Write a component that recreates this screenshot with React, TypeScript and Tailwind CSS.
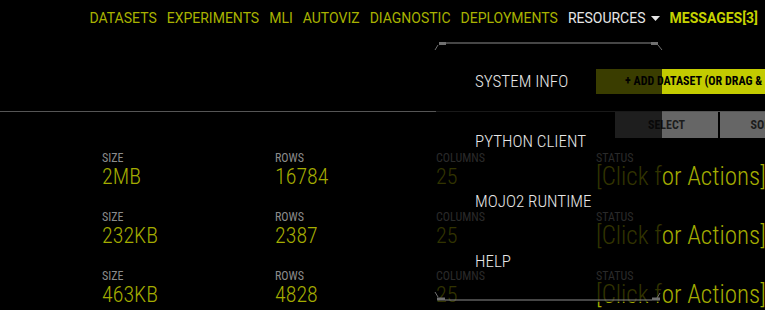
const NAV = ['DATASETS', 'EXPERIMENTS', 'MLI', 'AUTOVIZ', 'DIAGNOSTIC', 'DEPLOYMENTS'];

const DATASETS = [
  { size: '2MB', rows: '16784', cols: '25' },
  { size: '232KB', rows: '2387', cols: '25' },
  { size: '463KB', rows: '4828', cols: '25' },
];

const MENU = ['SYSTEM INFO', 'PYTHON CLIENT', 'MOJO2 RUNTIME', 'HELP'];

const Stat = ({ label, value, big }: { label: string; value: string; big?: boolean }) => (
  <div className="flex flex-col">
    <span className="text-[12px] leading-[13px] text-[#8c8c8c]">{label}</span>
    <span className={`${big ? 'text-[25px]' : 'text-[22px]'} leading-[24px] font-light text-[#a4ac00] whitespace-nowrap`}>
      {value}
    </span>
  </div>
);

export default function App() {
  return (
    <div className="relative w-[765px] h-[310px] overflow-hidden bg-black font-['Roboto_Condensed',Roboto,sans-serif]">
      {/* top nav */}
      <nav className="h-[36px] flex items-center justify-end gap-[10px] pr-[7px] font-['Roboto',sans-serif] text-[14px] leading-[20px]">
        {NAV.map((n) => (
          <span key={n} className="text-[#a8b200]">{n}</span>
        ))}
        <span className="flex items-center gap-[5px] text-[#e6e6e6]">
          RESOURCES
          <svg width="9" height="5" viewBox="0 0 9 5"><path d="M0 0h9L4.5 5z" fill="#e6e6e6" /></svg>
        </span>
        <span className="font-bold text-[#c6d200]">MESSAGES[3]</span>
      </nav>

      {/* toolbar */}
      <div className="h-[76px] pl-[596px] pt-[32px] border-b border-[#555]">
        <button className="h-[25px] px-[29px] bg-[#c3cb00] text-black text-[12px] font-bold whitespace-nowrap">
          + ADD DATASET (OR DRAG &amp; DROP)
        </button>
      </div>
      <div className="flex gap-[2px] pl-[615px]">
        <button className="w-[103px] h-[26px] shrink-0 bg-[#666] text-[#1c1c1c] text-[12px] font-bold">SELECT</button>
        <button className="w-[103px] h-[26px] shrink-0 bg-[#666] text-[#1c1c1c] text-[12px] font-bold">SORT BY</button>
      </div>

      {/* dataset rows */}
      <div className="flex flex-col gap-[22px] pl-[102px] mt-[14px]">
        {DATASETS.map((d, i) => (
          <div key={i} className="grid grid-cols-[173px_161px_160px_200px]">
            <Stat label="SIZE" value={d.size} />
            <Stat label="ROWS" value={d.rows} />
            <Stat label="COLUMNS" value={d.cols} />
            <Stat label="STATUS" value="[Click for Actions]" big />
          </div>
        ))}
      </div>

      {/* resources dropdown */}
      <div className="absolute left-[436px] top-[40px] w-[226px] h-[262px] bg-black/70">
        <div className="flex flex-col pt-[12px] pl-[39px]">
          {MENU.map((m) => (
            <div key={m} className="h-[60px] flex items-center text-[17px] font-light text-[#e8e8e8]">
              {m}
            </div>
          ))}
        </div>
      </div>
      <svg className="absolute left-[432px] top-[38px]" width="234" height="14" viewBox="0 0 234 14">
        <rect x="7" y="4" width="7" height="3" fill="#707070" />
        <rect x="14" y="4.5" width="205" height="1" fill="#8c8c8c" />
        <rect x="219" y="4" width="7" height="3" fill="#707070" />
        <path d="M6 7L3 12M226 7L230 12" stroke="#707070" strokeWidth="1" />
      </svg>
      <svg className="absolute left-[432px] top-[290px]" width="234" height="14" viewBox="0 0 234 14">
        <rect x="5" y="7.5" width="8" height="3" fill="#707070" />
        <rect x="13" y="9.5" width="207" height="1" fill="#8c8c8c" />
        <rect x="220" y="7.5" width="8" height="3" fill="#707070" />
        <path d="M3 2L6 7M228 3L225 8" stroke="#707070" strokeWidth="1" />
      </svg>
    </div>
  );
}
